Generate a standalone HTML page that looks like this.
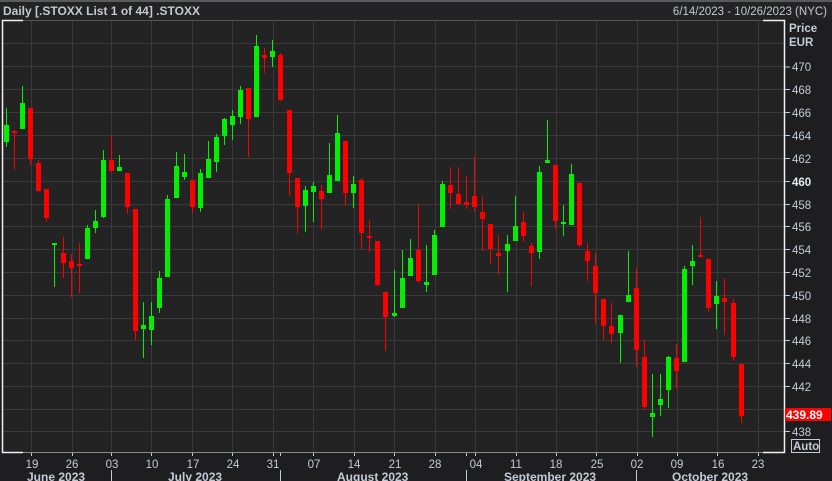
<!DOCTYPE html>
<html><head><meta charset="utf-8"><style>
html,body{margin:0;padding:0;background:#1e1e20;width:832px;height:481px;overflow:hidden}
svg{display:block}
text{font-family:"Liberation Sans",sans-serif}
</style></head><body>
<svg width="832" height="481" viewBox="0 0 832 481" xmlns="http://www.w3.org/2000/svg">
<rect x="0" y="0" width="832" height="481" fill="#1e1e20"/>
<rect x="0" y="0" width="832" height="2" fill="#5a5a5a"/>
<rect x="0" y="2" width="832" height="18" fill="#232325"/>
<text x="3" y="15" font-size="12" font-weight="bold" fill="#c4c8cc">Daily [.STOXX List 1 of 44] .STOXX</text>
<text x="827" y="15" font-size="11.5" fill="#c4c8cc" text-anchor="end">6/14/2023 - 10/26/2023 (NYC)</text>
<rect x="2" y="20" width="782" height="432" fill="#232323"/>
<g stroke="#3a3a3a" stroke-width="1">
<line x1="2" x2="784" y1="43.5" y2="43.5"/><line x1="2" x2="784" y1="66.5" y2="66.5"/><line x1="2" x2="784" y1="89.5" y2="89.5"/><line x1="2" x2="784" y1="112.5" y2="112.5"/><line x1="2" x2="784" y1="135.5" y2="135.5"/><line x1="2" x2="784" y1="158.5" y2="158.5"/><line x1="2" x2="784" y1="181.5" y2="181.5"/><line x1="2" x2="784" y1="204.5" y2="204.5"/><line x1="2" x2="784" y1="226.5" y2="226.5"/><line x1="2" x2="784" y1="249.5" y2="249.5"/><line x1="2" x2="784" y1="272.5" y2="272.5"/><line x1="2" x2="784" y1="295.5" y2="295.5"/><line x1="2" x2="784" y1="318.5" y2="318.5"/><line x1="2" x2="784" y1="340.5" y2="340.5"/><line x1="2" x2="784" y1="363.5" y2="363.5"/><line x1="2" x2="784" y1="386.5" y2="386.5"/><line x1="2" x2="784" y1="409.5" y2="409.5"/><line x1="2" x2="784" y1="431.5" y2="431.5"/>
<line y1="20" y2="452" x1="31.5" x2="31.5"/><line y1="20" y2="452" x1="72.5" x2="72.5"/><line y1="20" y2="452" x1="111.5" x2="111.5"/><line y1="20" y2="452" x1="151.5" x2="151.5"/><line y1="20" y2="452" x1="192.5" x2="192.5"/><line y1="20" y2="452" x1="232.5" x2="232.5"/><line y1="20" y2="452" x1="273.5" x2="273.5"/><line y1="20" y2="452" x1="313.5" x2="313.5"/><line y1="20" y2="452" x1="354.5" x2="354.5"/><line y1="20" y2="452" x1="394.5" x2="394.5"/><line y1="20" y2="452" x1="435.5" x2="435.5"/><line y1="20" y2="452" x1="475.5" x2="475.5"/><line y1="20" y2="452" x1="516.5" x2="516.5"/><line y1="20" y2="452" x1="556.5" x2="556.5"/><line y1="20" y2="452" x1="596.5" x2="596.5"/><line y1="20" y2="452" x1="637.5" x2="637.5"/><line y1="20" y2="452" x1="677.5" x2="677.5"/><line y1="20" y2="452" x1="717.5" x2="717.5"/><line y1="20" y2="452" x1="758.5" x2="758.5"/>
</g>
<line x1="2" x2="784" y1="20.5" y2="20.5" stroke="#555"/>
<line x1="2" x2="784" y1="452.5" y2="452.5" stroke="#8a8a8a"/>
<g stroke="#f0f0f0" stroke-width="1.5" fill="none">
<polyline points="23,20.5 2.5,20.5 2.5,452.5 23,452.5"/>
<polyline points="763,20.5 784.5,20.5 784.5,452.5 763,452.5"/>
</g>
<g fill="#00f000">
<rect x="6" y="108" width="1" height="39"/><rect x="4" y="125" width="5" height="17"/>
<rect x="22" y="86" width="1" height="43"/><rect x="20" y="103" width="5" height="26"/>
<rect x="54" y="243" width="1" height="44"/><rect x="52" y="243" width="5" height="2"/>
<rect x="87" y="225" width="1" height="34"/><rect x="85" y="228" width="5" height="31"/>
<rect x="95" y="210" width="1" height="23"/><rect x="93" y="221" width="5" height="7"/>
<rect x="103" y="150" width="1" height="68"/><rect x="101" y="160" width="5" height="57"/>
<rect x="119" y="155" width="1" height="16"/><rect x="117" y="167" width="5" height="4"/>
<rect x="143" y="302" width="1" height="56"/><rect x="141" y="325" width="5" height="4"/>
<rect x="151" y="302" width="1" height="43"/><rect x="149" y="316" width="5" height="14"/>
<rect x="159" y="271" width="1" height="42"/><rect x="157" y="278" width="5" height="30"/>
<rect x="167" y="195" width="1" height="82"/><rect x="165" y="199" width="5" height="78"/>
<rect x="176" y="152" width="1" height="46"/><rect x="174" y="166" width="5" height="32"/>
<rect x="184" y="154" width="1" height="26"/><rect x="182" y="172" width="5" height="5"/>
<rect x="200" y="169" width="1" height="43"/><rect x="198" y="173" width="5" height="35"/>
<rect x="208" y="141" width="1" height="37"/><rect x="206" y="159" width="5" height="19"/>
<rect x="216" y="134" width="1" height="38"/><rect x="214" y="137" width="5" height="25"/>
<rect x="224" y="118" width="1" height="27"/><rect x="222" y="119" width="5" height="17"/>
<rect x="232" y="110" width="1" height="30"/><rect x="230" y="116" width="5" height="9"/>
<rect x="240" y="86" width="1" height="38"/><rect x="238" y="90" width="5" height="27"/>
<rect x="256" y="35" width="1" height="82"/><rect x="254" y="46" width="5" height="71"/>
<rect x="272" y="40" width="1" height="27"/><rect x="270" y="51" width="5" height="6"/>
<rect x="305" y="186" width="1" height="46"/><rect x="303" y="190" width="5" height="16"/>
<rect x="313" y="182" width="1" height="40"/><rect x="311" y="186" width="5" height="6"/>
<rect x="329" y="143" width="1" height="50"/><rect x="327" y="175" width="5" height="18"/>
<rect x="337" y="115" width="1" height="66"/><rect x="335" y="133" width="5" height="48"/>
<rect x="353" y="176" width="1" height="32"/><rect x="351" y="184" width="5" height="9"/>
<rect x="394" y="270" width="1" height="47"/><rect x="392" y="313" width="5" height="3"/>
<rect x="402" y="250" width="1" height="58"/><rect x="400" y="278" width="5" height="30"/>
<rect x="410" y="239" width="1" height="37"/><rect x="408" y="258" width="5" height="18"/>
<rect x="426" y="245" width="1" height="47"/><rect x="424" y="282" width="5" height="3"/>
<rect x="434" y="230" width="1" height="45"/><rect x="432" y="235" width="5" height="40"/>
<rect x="442" y="181" width="1" height="46"/><rect x="440" y="184" width="5" height="43"/>
<rect x="507" y="235" width="1" height="57"/><rect x="505" y="244" width="5" height="7"/>
<rect x="515" y="196" width="1" height="45"/><rect x="513" y="226" width="5" height="15"/>
<rect x="539" y="166" width="1" height="93"/><rect x="537" y="172" width="5" height="80"/>
<rect x="547" y="120" width="1" height="43"/><rect x="545" y="160" width="5" height="3"/>
<rect x="563" y="205" width="1" height="31"/><rect x="561" y="222" width="5" height="2"/>
<rect x="571" y="164" width="1" height="61"/><rect x="569" y="174" width="5" height="51"/>
<rect x="620" y="315" width="1" height="48"/><rect x="618" y="315" width="5" height="18"/>
<rect x="628" y="251" width="1" height="51"/><rect x="626" y="295" width="5" height="7"/>
<rect x="652" y="374" width="1" height="63"/><rect x="650" y="413" width="5" height="4"/>
<rect x="660" y="374" width="1" height="42"/><rect x="658" y="399" width="5" height="6"/>
<rect x="668" y="356" width="1" height="52"/><rect x="666" y="357" width="5" height="33"/>
<rect x="684" y="266" width="1" height="96"/><rect x="682" y="269" width="5" height="93"/>
<rect x="692" y="245" width="1" height="40"/><rect x="690" y="261" width="5" height="5"/>
<rect x="716" y="281" width="1" height="48"/><rect x="714" y="296" width="5" height="8"/>
</g>
<g fill="#ff0000">
<rect x="14" y="130" width="1" height="39"/><rect x="12" y="131" width="5" height="2"/>
<rect x="30" y="108" width="1" height="57"/><rect x="28" y="108" width="5" height="51"/>
<rect x="38" y="160" width="1" height="32"/><rect x="36" y="163" width="5" height="28"/>
<rect x="46" y="189" width="1" height="33"/><rect x="44" y="189" width="5" height="29"/>
<rect x="63" y="237" width="1" height="41"/><rect x="61" y="253" width="5" height="10"/>
<rect x="71" y="254" width="1" height="43"/><rect x="69" y="261" width="5" height="7"/>
<rect x="79" y="243" width="1" height="50"/><rect x="77" y="264" width="5" height="2"/>
<rect x="111" y="136" width="1" height="36"/><rect x="109" y="160" width="5" height="11"/>
<rect x="127" y="173" width="1" height="41"/><rect x="125" y="173" width="5" height="34"/>
<rect x="135" y="209" width="1" height="131"/><rect x="133" y="209" width="5" height="122"/>
<rect x="192" y="180" width="1" height="33"/><rect x="190" y="180" width="5" height="27"/>
<rect x="248" y="88" width="1" height="69"/><rect x="246" y="88" width="5" height="31"/>
<rect x="264" y="48" width="1" height="25"/><rect x="262" y="55" width="5" height="3"/>
<rect x="280" y="53" width="1" height="48"/><rect x="278" y="55" width="5" height="45"/>
<rect x="289" y="110" width="1" height="86"/><rect x="287" y="110" width="5" height="63"/>
<rect x="297" y="178" width="1" height="55"/><rect x="295" y="178" width="5" height="29"/>
<rect x="321" y="185" width="1" height="44"/><rect x="319" y="191" width="5" height="8"/>
<rect x="345" y="141" width="1" height="65"/><rect x="343" y="141" width="5" height="52"/>
<rect x="361" y="178" width="1" height="71"/><rect x="359" y="180" width="5" height="53"/>
<rect x="369" y="220" width="1" height="32"/><rect x="367" y="236" width="5" height="2"/>
<rect x="377" y="241" width="1" height="46"/><rect x="375" y="241" width="5" height="44"/>
<rect x="385" y="292" width="1" height="59"/><rect x="383" y="292" width="5" height="25"/>
<rect x="418" y="205" width="1" height="78"/><rect x="416" y="250" width="5" height="31"/>
<rect x="450" y="167" width="1" height="42"/><rect x="448" y="185" width="5" height="8"/>
<rect x="458" y="167" width="1" height="37"/><rect x="456" y="194" width="5" height="10"/>
<rect x="466" y="176" width="1" height="33"/><rect x="464" y="202" width="5" height="3"/>
<rect x="474" y="157" width="1" height="54"/><rect x="472" y="196" width="5" height="11"/>
<rect x="482" y="197" width="1" height="54"/><rect x="480" y="212" width="5" height="7"/>
<rect x="490" y="224" width="1" height="40"/><rect x="488" y="224" width="5" height="25"/>
<rect x="498" y="235" width="1" height="40"/><rect x="496" y="253" width="5" height="3"/>
<rect x="523" y="212" width="1" height="30"/><rect x="521" y="222" width="5" height="14"/>
<rect x="531" y="243" width="1" height="43"/><rect x="529" y="246" width="5" height="7"/>
<rect x="555" y="165" width="1" height="64"/><rect x="553" y="165" width="5" height="56"/>
<rect x="579" y="183" width="1" height="64"/><rect x="577" y="183" width="5" height="62"/>
<rect x="587" y="243" width="1" height="38"/><rect x="585" y="251" width="5" height="10"/>
<rect x="595" y="253" width="1" height="70"/><rect x="593" y="266" width="5" height="27"/>
<rect x="603" y="299" width="1" height="41"/><rect x="601" y="299" width="5" height="27"/>
<rect x="611" y="303" width="1" height="40"/><rect x="609" y="326" width="5" height="8"/>
<rect x="636" y="269" width="1" height="98"/><rect x="634" y="288" width="5" height="62"/>
<rect x="644" y="340" width="1" height="69"/><rect x="642" y="357" width="5" height="50"/>
<rect x="676" y="344" width="1" height="45"/><rect x="674" y="358" width="5" height="13"/>
<rect x="700" y="217" width="1" height="40"/><rect x="698" y="255" width="5" height="2"/>
<rect x="708" y="259" width="1" height="52"/><rect x="706" y="259" width="5" height="49"/>
<rect x="724" y="278" width="1" height="57"/><rect x="722" y="298" width="5" height="4"/>
<rect x="733" y="299" width="1" height="62"/><rect x="731" y="303" width="5" height="54"/>
<rect x="741" y="364" width="1" height="59"/><rect x="739" y="364" width="5" height="52"/>
</g>
<g font-size="11.5" fill="#c3cbd6">
<text x="789" y="32" font-weight="bold">Price</text>
<text x="789" y="46" font-weight="bold">EUR</text>
</g>
<g stroke="#c3cbd6"><line x1="785" x2="790" y1="67" y2="67"/><line x1="785" x2="790" y1="89.5" y2="89.5"/><line x1="785" x2="790" y1="112.5" y2="112.5"/><line x1="785" x2="790" y1="135.5" y2="135.5"/><line x1="785" x2="790" y1="158.5" y2="158.5"/><line x1="785" x2="790" y1="181.5" y2="181.5"/><line x1="785" x2="790" y1="204.5" y2="204.5"/><line x1="785" x2="790" y1="226.5" y2="226.5"/><line x1="785" x2="790" y1="249.5" y2="249.5"/><line x1="785" x2="790" y1="272.5" y2="272.5"/><line x1="785" x2="790" y1="295.5" y2="295.5"/><line x1="785" x2="790" y1="318.5" y2="318.5"/><line x1="785" x2="790" y1="340.5" y2="340.5"/><line x1="785" x2="790" y1="363.5" y2="363.5"/><line x1="785" x2="790" y1="386.5" y2="386.5"/><line x1="785" x2="790" y1="431.5" y2="431.5"/></g>
<g font-size="11.5" fill="#c3cbd6">
<text x="792" y="71">470</text><text x="792" y="94">468</text><text x="792" y="117">466</text><text x="792" y="140">464</text><text x="792" y="163">462</text><text x="792" y="186" font-weight="bold" fill="#e6eaee">460</text><text x="792" y="209">458</text><text x="792" y="231">456</text><text x="792" y="254">454</text><text x="792" y="277">452</text><text x="792" y="300">450</text><text x="792" y="323">448</text><text x="792" y="345">446</text><text x="792" y="368">444</text><text x="792" y="391">442</text><text x="792" y="436">438</text>
</g>
<rect x="785" y="408" width="46" height="13" fill="#ff0000"/>
<text x="786" y="419" font-size="12" font-weight="bold" fill="#ffffff">439.89</text>
<rect x="791.5" y="439.5" width="28" height="13" fill="none" stroke="#c3cbd6"/>
<text x="793" y="450" font-size="11.5" font-weight="bold" fill="#c3cbd6">Auto</text>
<g stroke="#c3cbd6"><line x1="31.5" x2="31.5" y1="453" y2="456"/><line x1="72.5" x2="72.5" y1="453" y2="456"/><line x1="111.5" x2="111.5" y1="453" y2="456"/><line x1="151.5" x2="151.5" y1="453" y2="456"/><line x1="192.5" x2="192.5" y1="453" y2="456"/><line x1="232.5" x2="232.5" y1="453" y2="456"/><line x1="273.5" x2="273.5" y1="453" y2="456"/><line x1="280.5" x2="280.5" y1="453" y2="456"/><line x1="313.5" x2="313.5" y1="453" y2="456"/><line x1="354.5" x2="354.5" y1="453" y2="456"/><line x1="394.5" x2="394.5" y1="453" y2="456"/><line x1="435.5" x2="435.5" y1="453" y2="456"/><line x1="466.5" x2="466.5" y1="453" y2="456"/><line x1="475.5" x2="475.5" y1="453" y2="456"/><line x1="516.5" x2="516.5" y1="453" y2="456"/><line x1="556.5" x2="556.5" y1="453" y2="456"/><line x1="596.5" x2="596.5" y1="453" y2="456"/><line x1="637.5" x2="637.5" y1="453" y2="456"/><line x1="677.5" x2="677.5" y1="453" y2="456"/><line x1="717.5" x2="717.5" y1="453" y2="456"/><line x1="758.5" x2="758.5" y1="453" y2="456"/>
<line x1="111.5" x2="111.5" y1="470" y2="481"/><line x1="280.5" x2="280.5" y1="470" y2="481"/><line x1="466.5" x2="466.5" y1="470" y2="481"/><line x1="636.5" x2="636.5" y1="470" y2="481"/></g>
<g font-size="11.5" fill="#c3cbd6" text-anchor="middle">
<text x="32" y="468">19</text><text x="72" y="468">26</text><text x="112" y="468">03</text><text x="152" y="468">10</text><text x="193" y="468">17</text><text x="233" y="468">24</text><text x="273" y="468">31</text><text x="314" y="468">07</text><text x="354" y="468">14</text><text x="395" y="468">21</text><text x="435" y="468">28</text><text x="476" y="468">04</text><text x="516" y="468">11</text><text x="556" y="468">18</text><text x="597" y="468">25</text><text x="637" y="468">02</text><text x="677" y="468">09</text><text x="718" y="468">16</text><text x="758" y="468">23</text>
</g>
<g font-size="12" font-weight="bold" fill="#c3cbd6">
<text x="27" y="481">June 2023</text><text x="168" y="481">July 2023</text><text x="337" y="481">August 2023</text><text x="504" y="481">September 2023</text><text x="672" y="481">October 2023</text>
</g>
</svg>
</body></html>
